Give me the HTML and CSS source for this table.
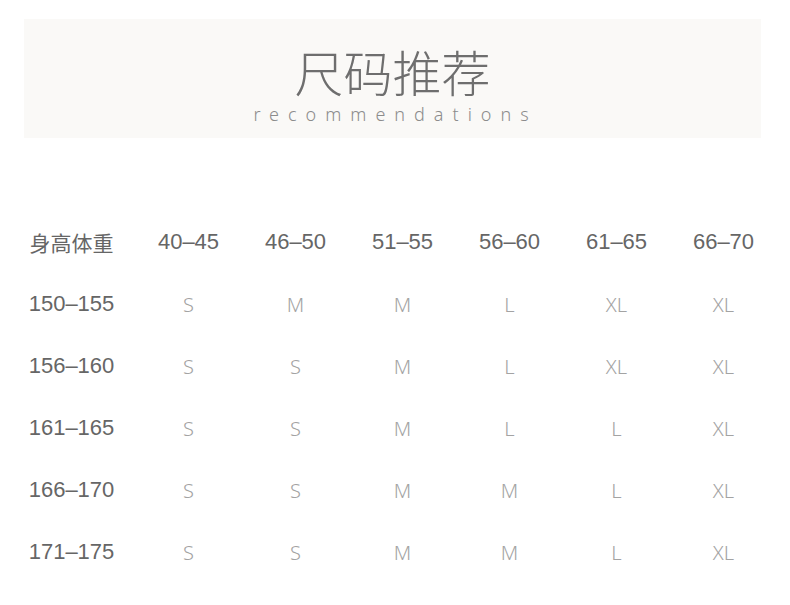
FILE: index.html
```html
<!DOCTYPE html>
<html lang="zh">
<head>
<meta charset="utf-8">
<link rel="stylesheet" href="styles.css">
</head>
<body>
<div class="banner">
  <div class="title">尺码推荐</div>
  <div class="subtitle">recommendations</div>
</div>
<div class="table">
  <div class="cell head first">身高体重</div>
  <div class="cell head">40–45</div>
  <div class="cell head">46–50</div>
  <div class="cell head">51–55</div>
  <div class="cell head">56–60</div>
  <div class="cell head">61–65</div>
  <div class="cell head">66–70</div>

  <div class="cell head">150–155</div>
  <div class="cell size">S</div><div class="cell size">M</div><div class="cell size">M</div><div class="cell size">L</div><div class="cell size">XL</div><div class="cell size">XL</div>

  <div class="cell head">156–160</div>
  <div class="cell size">S</div><div class="cell size">S</div><div class="cell size">M</div><div class="cell size">L</div><div class="cell size">XL</div><div class="cell size">XL</div>

  <div class="cell head">161–165</div>
  <div class="cell size">S</div><div class="cell size">S</div><div class="cell size">M</div><div class="cell size">L</div><div class="cell size">L</div><div class="cell size">XL</div>

  <div class="cell head">166–170</div>
  <div class="cell size">S</div><div class="cell size">S</div><div class="cell size">M</div><div class="cell size">M</div><div class="cell size">L</div><div class="cell size">XL</div>

  <div class="cell head">171–175</div>
  <div class="cell size">S</div><div class="cell size">S</div><div class="cell size">M</div><div class="cell size">M</div><div class="cell size">L</div><div class="cell size">XL</div>
</div>
</body>
</html>
```
FILE: styles.css
```css
html, body {
  margin: 0;
  padding: 0;
  background: #ffffff;
}
body {
  width: 790px;
  height: 605px;
  overflow: hidden;
  font-family: "Liberation Sans", "Noto Sans CJK SC", sans-serif;
}
.banner {
  margin: 19px 0 0 24px;
  width: 737px;
  height: 119px;
  background: #faf9f7;
  display: flex;
  flex-direction: column;
  align-items: center;
}
.title {
  margin-top: 24px;
  font-family: "Noto Sans CJK SC", sans-serif;
  font-weight: 300;
  font-size: 49px;
  line-height: 56px;
  color: #6e6e6e;
}
.subtitle {
  margin-top: 4px;
  padding-left: 6px;
  font-family: "Noto Sans", sans-serif;
  font-weight: 300;
  font-size: 18px;
  line-height: 22px;
  letter-spacing: 9px;
  color: #8c8c8c;
}
.table {
  margin-top: 73px;
  padding-left: 8px;
  display: grid;
  grid-template-columns: 127px repeat(6, 107px);
  grid-auto-rows: 62px;
}
.cell {
  display: flex;
  align-items: center;
  justify-content: center;
  font-size: 22px;
}
.head {
  color: #666666;
  font-family: "Liberation Sans", "Noto Sans CJK SC", sans-serif;
}
.first {
  font-family: "Noto Sans CJK SC", sans-serif;
  font-size: 21px;
}
.size {
  color: #a3a3a3;
  font-family: "Noto Sans", sans-serif;
  font-weight: 300;
  font-size: 20px;
}
```
